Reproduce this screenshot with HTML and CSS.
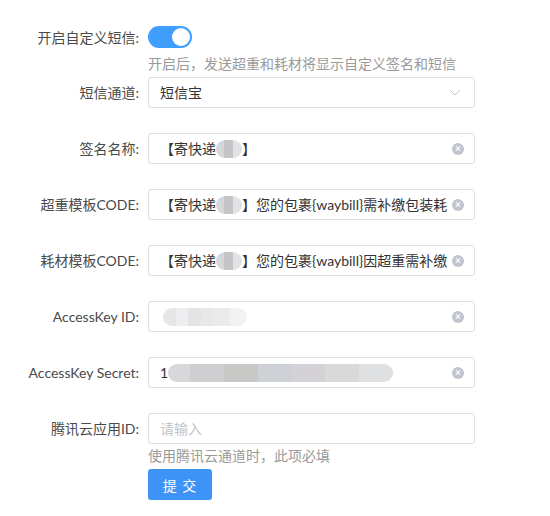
FILE: index.html
```html
<!DOCTYPE html>
<html lang="zh-CN">
<head>
    <meta charset="UTF-8">
    <meta name="viewport" content="width=device-width, initial-scale=1.0">
    <title>短信设置</title>
    <link rel="stylesheet" href="styles.css">
</head>
<body>
    <form class="sms-form">
        <div class="form-item has-hint">
            <label class="form-label">开启自定义短信:</label>
            <div class="form-content">
                <div class="control">
                    <span class="switch is-on"><span class="switch-knob"></span></span>
                </div>
                <div class="form-hint">开启后，发送超重和耗材将显示自定义签名和短信</div>
            </div>
        </div>

        <div class="form-item">
            <label class="form-label">短信通道:</label>
            <div class="form-content">
                <div class="input">
                    <span class="input-text">短信宝</span>
                    <svg class="arrow" width="12" height="7" viewBox="0 0 12 7">
                        <path d="M1 1 L6 6 L11 1" fill="none" stroke="#c0c4cc" stroke-width="1"/>
                    </svg>
                </div>
            </div>
        </div>

        <div class="form-item">
            <label class="form-label">签名名称:</label>
            <div class="form-content">
                <div class="input">
                    <span class="input-text">【寄快递<span class="masked mask-short"></span>】</span>
                    <span class="clear"></span>
                </div>
            </div>
        </div>

        <div class="form-item">
            <label class="form-label">超重模板CODE:</label>
            <div class="form-content">
                <div class="input">
                    <span class="input-text">【寄快递<span class="masked mask-short"></span>】您的包裹{waybill}需补缴包装耗</span>
                    <span class="clear"></span>
                </div>
            </div>
        </div>

        <div class="form-item">
            <label class="form-label">耗材模板CODE:</label>
            <div class="form-content">
                <div class="input">
                    <span class="input-text">【寄快递<span class="masked mask-short"></span>】您的包裹{waybill}因超重需补缴</span>
                    <span class="clear"></span>
                </div>
            </div>
        </div>

        <div class="form-item">
            <label class="form-label">AccessKey ID:</label>
            <div class="form-content">
                <div class="input">
                    <span class="input-text"><span class="masked mask-id"></span></span>
                    <span class="clear"></span>
                </div>
            </div>
        </div>

        <div class="form-item">
            <label class="form-label">AccessKey Secret:</label>
            <div class="form-content">
                <div class="input">
                    <span class="input-text">1<span class="masked mask-secret"></span></span>
                    <span class="clear"></span>
                </div>
            </div>
        </div>

        <div class="form-item has-hint">
            <label class="form-label">腾讯云应用ID:</label>
            <div class="form-content">
                <div class="input">
                    <span class="input-text placeholder">请输入</span>
                </div>
                <div class="form-hint">使用腾讯云通道时，此项必填</div>
            </div>
        </div>

        <div class="form-actions">
            <button type="button" class="btn-primary">提 交</button>
        </div>
    </form>
</body>
</html>
```

FILE: styles.css
```css
body {
    margin: 0;
    font-family: Lato, "Noto Sans CJK SC", sans-serif;
    font-size: 14px;
    color: #444;
    background: #fff;
}

.sms-form {
    padding-top: 22px;
}

.form-item {
    display: flex;
    margin-bottom: 25px;
}

.form-item.has-hint {
    margin-bottom: 3px;
}

.form-label {
    width: 148px;
    flex-shrink: 0;
    box-sizing: border-box;
    padding-right: 9px;
    text-align: right;
    line-height: 31px;
    color: #4a4a4a;
}

.form-content {
    width: 327px;
}

.control {
    height: 30px;
    display: flex;
    align-items: center;
}

.switch {
    position: relative;
    display: inline-block;
    width: 44px;
    height: 22px;
    border-radius: 11px;
    background: #dcdfe6;
}

.switch.is-on {
    background: #409eff;
}

.switch-knob {
    position: absolute;
    top: 2px;
    left: 2px;
    width: 18px;
    height: 18px;
    border-radius: 50%;
    background: #fff;
}

.switch.is-on .switch-knob {
    left: 24px;
}

.form-hint {
    margin-top: 2px;
    line-height: 20px;
    color: #9a9a9a;
}

.input {
    display: flex;
    align-items: center;
    height: 31px;
    box-sizing: border-box;
    border: 1px solid #dcdfe6;
    border-radius: 3px;
    padding: 0 10px 0 11px;
}

.input-text {
    flex: 1;
    min-width: 0;
    white-space: nowrap;
    overflow: hidden;
    color: #333;
    line-height: 29px;
}

.input-text.placeholder {
    color: #c0c4cc;
}

.masked {
    display: inline-block;
    height: 18px;
    vertical-align: -4px;
    border-radius: 9px;
    filter: blur(0.6px);
}

.mask-short {
    width: 26px;
    background: linear-gradient(90deg, #d6d7d9 0 30%, #c4c5c7 30% 65%, #e2e2e4 65%);
}

.mask-id {
    width: 84px;
    margin-left: 3px;
    background: linear-gradient(90deg, #e6e6e8 0 15%, #eeeef0 15% 30%, #e2e4e6 30% 45%, #e8e8e8 45% 60%, #ebebed 60% 80%, #f2f2f2 80%);
}

.mask-secret {
    width: 225px;
    background: linear-gradient(90deg, #d8d8da 0 10%, #cfcfd1 10% 25%, #c8c9c6 25% 40%, #cdd0d4 40% 55%, #d4d2d6 55% 70%, #d9d9d9 70% 85%, #dee0e1 85%);
}

.clear {
    position: relative;
    flex-shrink: 0;
    width: 12px;
    height: 12px;
    margin-left: 2px;
    border-radius: 50%;
    background: #c0c4cc;
}

.clear::before,
.clear::after {
    content: "";
    position: absolute;
    left: 3px;
    top: 5.5px;
    width: 6px;
    height: 1px;
    background: #fff;
    transform: rotate(45deg);
}

.clear::after {
    transform: rotate(-45deg);
}

.arrow {
    flex-shrink: 0;
    margin-right: 3px;
}

.form-actions {
    padding-left: 148px;
}

.btn-primary {
    width: 64px;
    height: 31px;
    border: none;
    border-radius: 3px;
    background: #3d94f6;
    color: #fff;
    font-family: inherit;
    font-size: 14px;
    letter-spacing: 1px;
    cursor: pointer;
}
```
